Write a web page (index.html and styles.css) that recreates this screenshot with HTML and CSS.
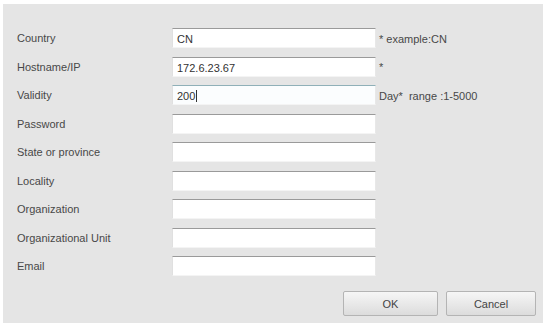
FILE: index.html
```html
<!DOCTYPE html>
<html>
<head>
<meta charset="utf-8">
<link rel="stylesheet" href="styles.css">
</head>
<body>
<div class="dialog">
  <div class="form">
    <div class="row"><span class="label">Country</span><span class="field">CN</span><span class="hint">* example:CN</span></div>
    <div class="row"><span class="label">Hostname/IP</span><span class="field">172.6.23.67</span><span class="hint">*</span></div>
    <div class="row"><span class="label">Validity</span><span class="field focus">200<span class="caret"></span></span><span class="hint">Day*&nbsp; range :1-5000</span></div>
    <div class="row"><span class="label">Password</span><span class="field"></span></div>
    <div class="row"><span class="label">State or province</span><span class="field"></span></div>
    <div class="row"><span class="label">Locality</span><span class="field"></span></div>
    <div class="row"><span class="label">Organization</span><span class="field"></span></div>
    <div class="row"><span class="label">Organizational Unit</span><span class="field"></span></div>
    <div class="row"><span class="label">Email</span><span class="field"></span></div>
  </div>
  <div class="buttons">
    <span class="btn ok">OK</span>
    <span class="btn cancel">Cancel</span>
  </div>
</div>
</body>
</html>
```
FILE: styles.css
```css
html, body {
  margin: 0;
  padding: 0;
  background: #ffffff;
}
body {
  width: 543px;
  height: 323px;
  overflow: hidden;
  font-family: "Liberation Sans", Arial, sans-serif;
  font-size: 11px;
  color: #484848;
}
.dialog {
  margin: 4px 0 0 3px;
  height: 319px;
  background: #e5e5e5;
  box-sizing: border-box;
  padding-top: 24px;
}
.form {
  display: flex;
  flex-direction: column;
  gap: 8.5px;
}
.row {
  display: flex;
  align-items: center;
  height: 20px;
}
.label {
  width: 155px;
  padding-left: 14px;
  flex: none;
}
.field {
  width: 204px;
  height: 20px;
  box-sizing: border-box;
  background: #ffffff;
  border-top: 1px solid #9a9a9a;
  border-left: 1px solid #e0e0e0;
  border-right: 1px solid #e8e8e8;
  border-bottom: 1px solid #f4f4f4;
  padding: 2px 0 0 4px;
  color: #333;
  display: flex;
  align-items: center;
  flex: none;
}
.field.focus {
  border-top-color: #8fb0b8;
  background: #fbfdfe;
}
.caret {
  display: inline-block;
  width: 1px;
  height: 12px;
  background: #333;
  margin-left: 1px;
}
.hint {
  margin-left: 3px;
  padding-top: 1px;
}
.buttons {
  display: flex;
  justify-content: flex-end;
  gap: 8px;
  padding-right: 7px;
  margin-top: 15px;
}
.btn {
  width: 95px;
  height: 25px;
  box-sizing: border-box;
  border: 1px solid #b4b4b4;
  border-radius: 2px;
  background: linear-gradient(#f6f6f6, #dcdcdc);
  display: flex;
  align-items: center;
  justify-content: center;
  color: #444;
}
.btn.cancel {
  width: 90px;
}
```
